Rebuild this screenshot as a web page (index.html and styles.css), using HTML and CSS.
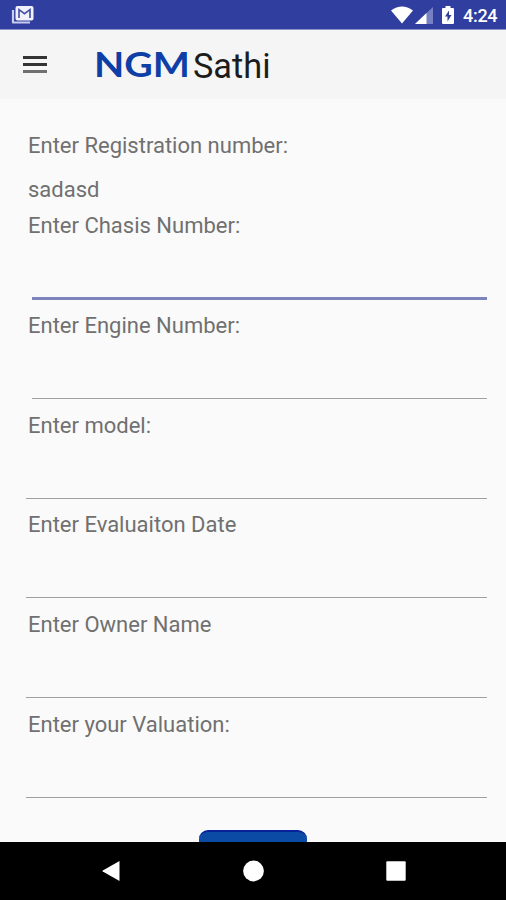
FILE: index.html
```html
<!DOCTYPE html>
<html lang="en">
<head>
<meta charset="utf-8">
<title>NGM Sathi</title>
<link rel="stylesheet" href="styles.css">
</head>
<body>
<div class="screen">
  <div class="status">
    <svg class="mail" width="24" height="20" viewBox="0 0 24 20">
      <path d="M2 5v12.500h17" fill="none" stroke="#c9cdeb" stroke-width="2.200" stroke-linejoin="round"/>
      <rect x="4.500" y="1" width="18" height="14.500" rx="2" fill="#f1f1fb"/>
      <path d="M8 13V4.600l5.500 4.200 5.500-4.200V13" fill="none" stroke="#4a54a5" stroke-width="1.700"/>
    </svg>
    <div class="indicators">
      <svg class="wifi" width="22" height="18" viewBox="0 0 22 18"><path d="M0 4.500Q11-3.500 22 4.500L11 17.500z" fill="#fff"/></svg>
      <svg class="signal" width="18" height="17" viewBox="0 0 18 17"><path d="M0 17L18 0v17z" fill="#7780c4"/><path d="M0 17L11.500 6v11z" fill="#fff"/></svg>
      <svg class="battery" width="12" height="18" viewBox="0 0 12 18"><path d="M3.500 0h5v2H11q1 0 1 1v14q0 1-1 1H1q-1 0-1-1V3q0-1 1-1h2.500z" fill="#fff"/><path d="M7 4.500L3 10.500h2.500v5l4-6.500H7z" fill="#303f9f"/></svg>
      <span class="clock">4:24</span>
    </div>
  </div>
  <header class="appbar">
    <div class="menu"><i></i><i></i><i></i></div>
    <svg class="brand" width="190" height="50" viewBox="0 0 190 50">
      <text class="ngm" x="0" y="37.500" textLength="96" lengthAdjust="spacingAndGlyphs">NGM</text>
      <text class="sathi" x="99" y="39" textLength="77.500" lengthAdjust="spacingAndGlyphs">Sathi</text>
    </svg>
  </header>
  <main class="form">
    <div class="label first">Enter Registration number:</div>
    <div class="label value">sadasd</div>
    <div class="field inset active"><div class="label">Enter Chasis Number:</div><div class="input"></div></div>
    <div class="field inset"><div class="label">Enter Engine Number:</div><div class="input"></div></div>
    <div class="field"><div class="label">Enter model:</div><div class="input"></div></div>
    <div class="field"><div class="label">Enter Evaluaiton Date</div><div class="input"></div></div>
    <div class="field"><div class="label">Enter Owner Name</div><div class="input"></div></div>
    <div class="field"><div class="label">Enter your Valuation:</div><div class="input"></div></div>
    <div class="submit"></div>
  </main>
  <nav class="navbar">
    <svg width="18" height="22" viewBox="0 0 18 22"><path d="M17.500 1v20L.8 11.600q-.8-.6 0-1.200z" fill="#fff"/></svg>
    <svg width="22" height="22" viewBox="0 0 22 22"><circle cx="11.500" cy="11" r="10.400" fill="#fff"/></svg>
    <svg width="20" height="20" viewBox="0 0 20 20"><rect x=".3" y=".3" width="19.400" height="19.400" rx="1" fill="#fff"/></svg>
  </nav>
</div>
</body>
</html>
```
FILE: styles.css
```css
* { box-sizing: border-box; }
body { margin: 0; font-family: Roboto, "Liberation Sans", sans-serif; }
.screen { width: 506px; height: 900px; display: flex; flex-direction: column; overflow: hidden; background: #fafafa; }
.status { height: 30px; flex: none; display: flex; justify-content: space-between; background: #303f9f; border-bottom: 1px solid #8b93ca; padding: 5px 8px 0 11px; }
.indicators { display: flex; color: #fff; }
.wifi { margin: 1px 2px 0 0; }
.signal { margin: 2px 9px 0 0; }
.battery { margin: 1px 9px 0 0; }
.clock { font-size: 18px; line-height: 22px; font-weight: 500; letter-spacing: -.3px; width: 35px; white-space: nowrap; }
.appbar { height: 69px; flex: none; display: flex; background: #f5f5f5; }
.menu { display: flex; flex-direction: column; gap: 4px; width: 24px; margin: 26px 47px 0 23px; }
.menu i { height: 3px; background: #333; }
.menu i:last-child { background: #707070; }
.brand { margin-top: 9px; }
.ngm { font: 700 35px Lato, sans-serif; fill: #0d3fa6; }
.sathi { font: 400 35px Roboto, sans-serif; fill: #1c1c1c; }
.form { flex: 1; min-height: 0; overflow: hidden; padding: 31px 19px 0 26px; }
.label { height: 30px; line-height: 31px; padding-left: 2px; font-size: 22px; color: #707070; white-space: nowrap; }
.value { margin: 14px 0 6px; }
.field { height: 99.8px; }
.input { height: 59px; border-bottom: 1.500px solid #a0a0a0; }
.inset .input { margin-left: 6px; }
.active .input { height: 60px; border-bottom: 3px solid #7c83bd; }
.submit { width: 108px; height: 50px; margin: 21px auto 0 173px; background: #0b4aa5; border-top: 2px solid #08229a; border-radius: 9px; }
.navbar { height: 58px; flex: none; display: flex; justify-content: space-between; align-items: center; background: #000; padding: 0 100px 0 102px; }
```
